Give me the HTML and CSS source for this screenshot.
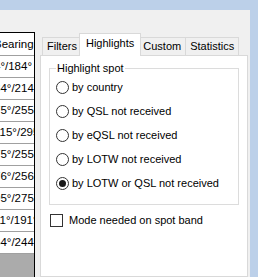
FILE: index.html
```html
<!DOCTYPE html>
<html>
<head>
    <title>Spot highlights</title>
    <link rel="stylesheet" href="styles.css">
</head>
<body>
    <div class="frame">
        <div class="caption"></div>
        <div class="shell">
            <div class="client">
                <div class="grid">
                    <div class="grid-head"><span>Bearing</span></div>
                    <div class="grid-row"><span>4°/184°</span></div>
                    <div class="grid-row"><span>34°/214°</span></div>
                    <div class="grid-row"><span>75°/255°</span></div>
                    <div class="grid-row"><span>115°/295°</span></div>
                    <div class="grid-row"><span>75°/255°</span></div>
                    <div class="grid-row"><span>76°/256°</span></div>
                    <div class="grid-row"><span>95°/275°</span></div>
                    <div class="grid-row"><span>11°/191°</span></div>
                    <div class="grid-row"><span>64°/244°</span></div>
                    <div class="grid-empty"></div>
                </div>

                <div class="tabs">
                    <div class="tab-strip">
                        <div class="tab">Filters</div>
                        <div class="tab selected">Highlights</div>
                        <div class="tab">Custom</div>
                        <div class="tab">Statistics</div>
                    </div>
                    <div class="tab-page">
                        <fieldset class="group">
                            <legend>Highlight spot</legend>
                            <label class="option"><span class="radio"></span>by country</label>
                            <label class="option"><span class="radio"></span>by QSL not received</label>
                            <label class="option"><span class="radio"></span>by eQSL not received</label>
                            <label class="option"><span class="radio"></span>by LOTW not received</label>
                            <label class="option"><span class="radio checked"></span>by LOTW or QSL not received</label>
                        </fieldset>
                        <label class="check"><span class="box"></span>Mode needed on spot band</label>
                    </div>
                </div>
            </div>
            <div class="edge"></div>
        </div>
    </div>
</body>
</html>
```

FILE: styles.css
```css
* {
    box-sizing: border-box;
}

body {
    margin: 0;
    font-family: "Liberation Sans", Arial, sans-serif;
    font-size: 11px;
    color: #000;
}

.frame {
    width: 258px;
    height: 277px;
    overflow: hidden;
    display: flex;
    flex-direction: column;
    background-color: #f0f0f0;
}

.caption {
    height: 10px;
    flex: none;
    background-color: #bcd0e9;
}

.shell {
    flex: 1;
    display: flex;
}

.client {
    flex: 1;
    display: flex;
    gap: 5px;
    padding-top: 22px;
    padding-right: 2px;
}

.edge {
    width: 8px;
    flex: none;
    background-color: #bcd0e9;
}

/* grid on the left, scrolled sideways */
.grid {
    width: 35px;
    flex: none;
    display: flex;
    flex-direction: column;
    border-right: 1px solid #000;
    background-color: #fff;
}

.grid-head {
    height: 24px;
    flex: none;
    border-top: 1px solid #000;
    border-bottom: 1px solid #a0a0a0;
    line-height: 23px;
    overflow: hidden;
    white-space: nowrap;
}

.grid-head span {
    margin-left: -6px;
    font-size: 11.5px;
}

.grid-row {
    height: 22px;
    flex: none;
    border-bottom: 1px solid #a0a0a0;
    line-height: 21px;
    overflow: hidden;
    white-space: nowrap;
}

.grid-row span {
    margin-left: -6px;
    font-size: 11.5px;
}

.grid-empty {
    flex: 1;
    background-color: #ababab;
}

/* tab control */
.tabs {
    flex: 1;
    display: flex;
    flex-direction: column;
}

.tab-strip {
    height: 23px;
    flex: none;
    display: flex;
    align-items: flex-end;
    padding-left: 2px;
}

.tab {
    height: 18px;
    padding: 0 4px;
    line-height: 17px;
    border: 1px solid #d9d9d9;
    border-bottom: none;
    margin-left: -1px;
    background-color: #f0f0f0;
}

.tab:first-child {
    margin-left: 0;
}

.tab.selected {
    position: relative;
    z-index: 1;
    height: 23px;
    margin: 0 -2px -1px -3px;
    padding: 0 6px;
    line-height: 19px;
    background-color: #fff;
}

.tab-page {
    flex: 1;
    border: 1px solid #d9d9d9;
    background-color: #fff;
    padding: 6px 8px 0 8px;
}

.group {
    margin: 0;
    padding: 0 0 9px 6px;
    border: 1px solid #dcdcdc;
}

.group legend {
    padding: 0 1px;
    line-height: 13px;
}

.option {
    height: 24px;
    display: flex;
    align-items: center;
    gap: 3px;
}

.radio {
    width: 13px;
    height: 13px;
    border: 1px solid #333;
    border-radius: 50%;
    background-color: #fff;
    display: flex;
    align-items: center;
    justify-content: center;
}

.radio.checked::after {
    content: "";
    width: 7px;
    height: 7px;
    border-radius: 50%;
    background-color: #1a1a1a;
}

.check {
    height: 20px;
    margin-top: 5px;
    margin-left: 1px;
    display: flex;
    align-items: center;
    gap: 6px;
}

.box {
    width: 13px;
    height: 13px;
    border: 1px solid #333;
    background-color: #fff;
}
```
